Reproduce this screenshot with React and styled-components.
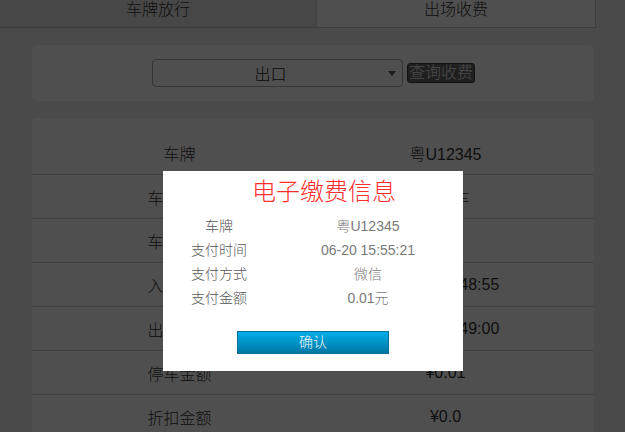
import React from "react";
import styled, { createGlobalStyle } from "styled-components";

const Global = createGlobalStyle`
  html, body { margin: 0; padding: 0; }
  body {
    background: #efefef;
    font-family: "Liberation Sans", "Noto Sans CJK SC", sans-serif;
    font-weight: 300;
    color: #333;
    overflow: hidden;
  }
  * { box-sizing: border-box; }
`;

const Page = styled.div`
  width: 625px;
  height: 432px;
  overflow: hidden;
`;

const Tabs = styled.div`
  width: 596px;
  height: 28px;
  display: grid;
  grid-template-columns: 316px 1fr;
  border-bottom: 1px solid #c8c8c8;
  border-right: 1px solid #c8c8c8;
`;

const Tab = styled.div`
  background: ${(p) => (p.$active ? "#ffffff" : "#e6e6e6")};
  border-left: ${(p) => (p.$active ? "1px solid #d0d0d0" : "none")};
  font-size: 16px;
  line-height: 20px;
  text-align: center;
  color: #333;
`;

const Card = styled.div`
  width: 562px;
  margin: 17px auto 0;
  background: #fff;
  border-radius: 5px;
`;

const SearchCard = styled(Card)`
  height: 56px;
  display: flex;
  align-items: center;
  justify-content: center;
  gap: 4px;
  padding-left: 2px;
`;

const SelectBox = styled.div`
  width: 251px;
  height: 28px;
  border: 1px solid #a8a8a8;
  border-radius: 4px;
  display: flex;
  align-items: center;
  padding-right: 6px;
`;

const SelectText = styled.span`
  flex: 1;
  text-align: center;
  font-size: 16px;
  color: #222;
`;

const Caret = styled.span`
  width: 0;
  height: 0;
  border-left: 4px solid transparent;
  border-right: 4px solid transparent;
  border-top: 5px solid #555;
`;

const QueryButton = styled.button`
  height: 20px;
  padding: 0 1px;
  border: 1px solid #3a3a3a;
  border-radius: 3px;
  background: #646464;
  color: #f0f0f0;
  font-family: inherit;
  font-weight: 300;
  font-size: 16px;
  line-height: 18px;
`;

const InfoCard = styled(Card)`
  padding-top: 13px;
  padding-bottom: 40px;
`;

const Row = styled.div`
  height: 44px;
  display: flex;
  align-items: center;
  padding: 0 15px;
  border-bottom: 1px solid #cfcfcf;
  font-size: 16px;
  color: #333;
`;

const Cell = styled.div`
  flex: 1;
  text-align: center;
`;

const Overlay = styled.div`
  position: fixed;
  inset: 0;
  background: rgba(0, 0, 0, 0.69);
`;

const Modal = styled.div`
  position: fixed;
  left: 163px;
  top: 171px;
  width: 300px;
  height: 200px;
  background: #fff;
  padding-top: 6px;
  display: flex;
  flex-direction: column;
  align-items: stretch;
`;

const ModalTitle = styled.div`
  font-size: 24px;
  line-height: 30px;
  color: #ff2e2e;
  text-align: center;
  padding-left: 22px;
  margin-bottom: 7px;
`;

const DetailGrid = styled.div`
  display: grid;
  grid-template-columns: 112px 1fr;
  grid-auto-rows: 24px;
  font-size: 14px;
  line-height: 24px;
`;

const DetailLabel = styled.div`
  text-align: center;
  color: #555;
`;

const DetailValue = styled.div`
  text-align: center;
  color: #7a7a7a;
  padding-right: 2px;
`;

const ConfirmButton = styled.button`
  align-self: center;
  margin-top: 21px;
  width: 152px;
  height: 23px;
  border: 1px solid #076e96;
  background: linear-gradient(#00aee9, #0077a3);
  color: #f4fbff;
  font-family: inherit;
  font-weight: 300;
  font-size: 14px;
  line-height: 21px;
  padding: 0;
`;

const rows = [
  ["车牌", "粤U12345"],
  ["车辆类型", "小型车"],
  ["车牌颜色", "蓝色"],
  ["入场时间", "06-20 15:48:55"],
  ["出场时间", "06-20 15:49:00"],
  ["停车金额", "¥0.01"],
  ["折扣金额", "¥0.0"],
];

const details = [
  ["车牌", "粤U12345"],
  ["支付时间", "06-20 15:55:21"],
  ["支付方式", "微信"],
  ["支付金额", "0.01元"],
];

export default function App() {
  return (
    <>
      <Global />
      <Page>
        <Tabs>
          <Tab>车牌放行</Tab>
          <Tab $active>出场收费</Tab>
        </Tabs>
        <SearchCard>
          <SelectBox>
            <SelectText>出口</SelectText>
            <Caret />
          </SelectBox>
          <QueryButton>查询收费</QueryButton>
        </SearchCard>
        <InfoCard>
          {rows.map(([k, v]) => (
            <Row key={k}>
              <Cell>{k}</Cell>
              <Cell>{v}</Cell>
            </Row>
          ))}
        </InfoCard>
      </Page>
      <Overlay />
      <Modal>
        <ModalTitle>电子缴费信息</ModalTitle>
        <DetailGrid>
          {details.map(([k, v]) => (
            <React.Fragment key={k}>
              <DetailLabel>{k}</DetailLabel>
              <DetailValue>{v}</DetailValue>
            </React.Fragment>
          ))}
        </DetailGrid>
        <ConfirmButton>确认</ConfirmButton>
      </Modal>
    </>
  );
}
